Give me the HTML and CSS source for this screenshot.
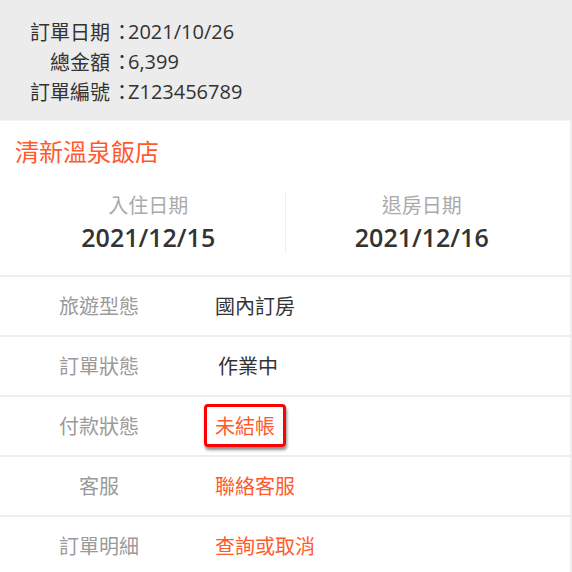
FILE: index.html
```html
<!DOCTYPE html>
<html lang="zh-Hant">
<head>
    <meta charset="UTF-8">
    <meta name="viewport" content="width=device-width, initial-scale=1.0">
    <title>訂單資訊</title>
    <link rel="stylesheet" href="styles.css">
</head>
<body>
    <div class="order-head">
        <div class="head-row"><span class="head-label">訂單日期</span><span class="colon">：</span>2021/10/26</div>
        <div class="head-row"><span class="head-label">總金額</span><span class="colon">：</span>6,399</div>
        <div class="head-row"><span class="head-label">訂單編號</span><span class="colon">：</span>Z123456789</div>
    </div>
    <div class="order-card">
        <div class="hotel-name">清新溫泉飯店</div>
        <div class="stay-dates">
            <div class="stay-col">
                <div class="stay-label">入住日期</div>
                <div class="stay-date">2021/12/15</div>
            </div>
            <div class="stay-col">
                <div class="stay-label">退房日期</div>
                <div class="stay-date">2021/12/16</div>
            </div>
        </div>
        <div class="info-row">
            <div class="info-label">旅遊型態</div>
            <div class="info-value">國內訂房</div>
        </div>
        <div class="info-row">
            <div class="info-label">訂單狀態</div>
            <div class="info-value status">作業中</div>
        </div>
        <div class="info-row">
            <div class="info-label">付款狀態</div>
            <div class="info-value"><span class="unpaid">未結帳</span></div>
        </div>
        <div class="info-row">
            <div class="info-label">客服</div>
            <div class="info-value link">聯絡客服</div>
        </div>
        <div class="info-row">
            <div class="info-label">訂單明細</div>
            <div class="info-value link">查詢或取消</div>
        </div>
    </div>
</body>
</html>
```

FILE: styles.css
```css
body {
    font-family: "Open Sans", "Noto Sans CJK TC", sans-serif;
    margin: 0;
    background-color: #fff;
    color: #333;
}
.order-head {
    background-color: #ececec;
    padding: 16px 30px 14px;
    font-size: 20px;
}
.head-row {
    display: flex;
    height: 30px;
    align-items: center;
    white-space: nowrap;
}
.head-label {
    flex: none;
    width: 80px;
    text-align: right;
}
.colon {
    flex: none;
    width: 18px;
    padding-left: 7px;
    box-sizing: border-box;
    overflow: hidden;
    font-feature-settings: "palt";
}
.order-card {
    border-right: 2px solid #eee;
    border-top: 1px solid #f4f4f4;
}
.hotel-name {
    color: #ff5a2c;
    font-size: 24px;
    padding: 12px 15px 0;
    height: 48px;
    box-sizing: border-box;
}
.stay-dates {
    display: flex;
    padding: 22px 12px;
    border-bottom: 2px solid #eee;
}
.stay-col {
    flex: 1;
    text-align: center;
}
.stay-col:first-child {
    border-right: 1px solid #eee;
}
.stay-label {
    color: #aaa;
    font-size: 20px;
    line-height: 30px;
}
.stay-date {
    font-size: 25px;
    font-weight: 600;
    line-height: 32px;
}
.info-row {
    display: flex;
    align-items: center;
    height: 58px;
    border-bottom: 2px solid #eee;
    font-size: 20px;
}
.info-label {
    width: 198px;
    text-align: center;
    color: #9a9a9a;
    padding-bottom: 2px;
}
.info-value {
    padding-left: 17px;
    padding-bottom: 2px;
}
.info-value.status {
    padding-left: 20px;
}
.link {
    color: #ff5a2c;
}
.unpaid {
    display: inline-block;
    color: #ff5a2c;
    margin-left: -11px;
    padding: 4px 8px;
    border: 3px solid #ff0000;
    border-radius: 4px;
    box-shadow: 1px 3px 3px rgba(0, 0, 0, 0.45);
}
```
